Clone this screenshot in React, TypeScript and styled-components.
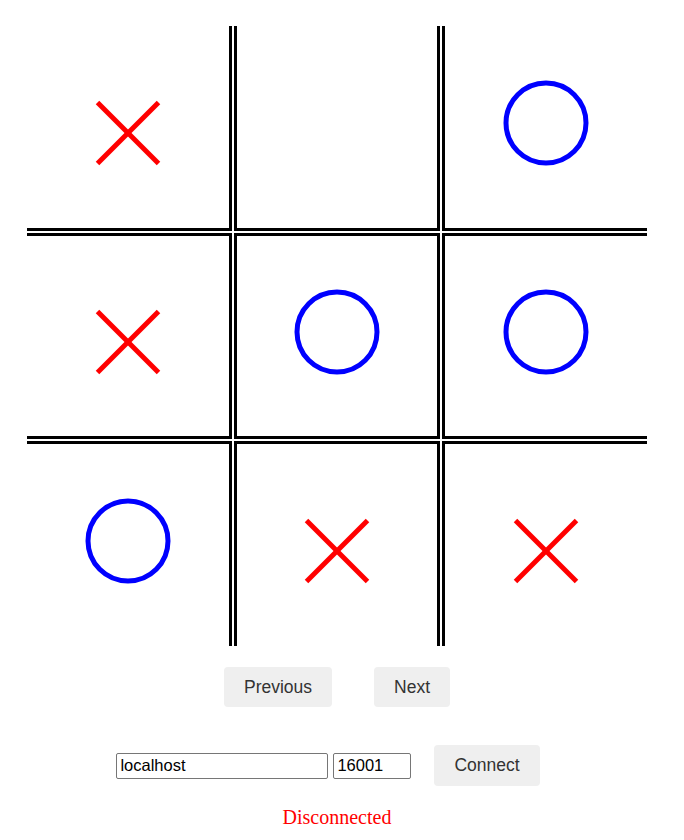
import styled, { createGlobalStyle } from "styled-components";

type Mark = "X" | "O" | null;

const board: Mark[] = ["X", null, "O", "X", "O", "O", "O", "X", "X"];

const GlobalStyle = createGlobalStyle`
  body {
    margin: 0;
    background: #ffffff;
  }
`;

const Cross = () => (
  <XIcon width="70" height="70" viewBox="0 0 70 70">
    <line x1="4.5" y1="4.5" x2="65.5" y2="65.5" stroke="#ff0000" strokeWidth="5" />
    <line x1="65.5" y1="4.5" x2="4.5" y2="65.5" stroke="#ff0000" strokeWidth="5" />
  </XIcon>
);

const Circle = () => (
  <OIcon width="90" height="90" viewBox="0 0 90 90">
    <circle cx="45" cy="45" r="40" fill="none" stroke="#0000ff" strokeWidth="5" />
  </OIcon>
);

const App = () => {
  return (
    <Page>
      <GlobalStyle />
      <Board>
        {board.map((mark, i) => (
          <Cell key={i} col={i % 3} row={Math.floor(i / 3)}>
            {mark === "X" && <Cross />}
            {mark === "O" && <Circle />}
          </Cell>
        ))}
      </Board>
      <NavRow>
        <Button>Previous</Button>
        <Button>Next</Button>
      </NavRow>
      <ConnectRow>
        <Input defaultValue="localhost" width={212} />
        <Input defaultValue="16001" width={78} />
        <ConnectButton>Connect</ConnectButton>
      </ConnectRow>
      <Status>Disconnected</Status>
    </Page>
  );
};

export default App;

const Page = styled.div`
  width: 674px;
  padding-top: 26px;
  display: flex;
  flex-direction: column;
  align-items: center;
`;

const Board = styled.div`
  display: grid;
  grid-template-columns: 205px 206px 205px;
  grid-template-rows: 205px 206px 205px;
  gap: 2px;
`;

const Cell = styled.div<{ col: number; row: number }>`
  box-sizing: border-box;
  display: flex;
  align-items: center;
  justify-content: center;
  border: 0 solid #000;
  border-left-width: ${(p) => (p.col > 0 ? 3 : 0)}px;
  border-right-width: ${(p) => (p.col < 2 ? 3 : 0)}px;
  border-top-width: ${(p) => (p.row > 0 ? 3 : 0)}px;
  border-bottom-width: ${(p) => (p.row < 2 ? 3 : 0)}px;
`;

const XIcon = styled.svg`
  display: block;
  margin-top: 12px;
`;

const OIcon = styled.svg`
  display: block;
  margin-bottom: 8px;
`;

const NavRow = styled.div`
  display: flex;
  gap: 42px;
  margin-top: 21px;
`;

const Button = styled.button`
  height: 40px;
  padding: 0 20px;
  border: none;
  border-radius: 4px;
  background: #efefef;
  color: #333333;
  font-family: "Liberation Sans", Arial, sans-serif;
  font-size: 17.5px;
  cursor: pointer;
`;

const ConnectRow = styled.div`
  display: flex;
  align-items: center;
  gap: 5px;
  margin: 38px 0 0 2px;
`;

const Input = styled.input<{ width: number }>`
  box-sizing: border-box;
  width: ${(p) => p.width}px;
  height: 26px;
  padding: 0 3px;
  border: 1px solid #767676;
  border-radius: 2px;
  font-family: "Liberation Sans", Arial, sans-serif;
  font-size: 16.5px;
  color: #000;
`;

const ConnectButton = styled(Button)`
  height: 41px;
  margin: 0 20px 0 18px;
`;

const Status = styled.div`
  margin-top: 20px;
  font-family: "Liberation Serif", "Times New Roman", serif;
  font-size: 20px;
  color: #ff0000;
`;
